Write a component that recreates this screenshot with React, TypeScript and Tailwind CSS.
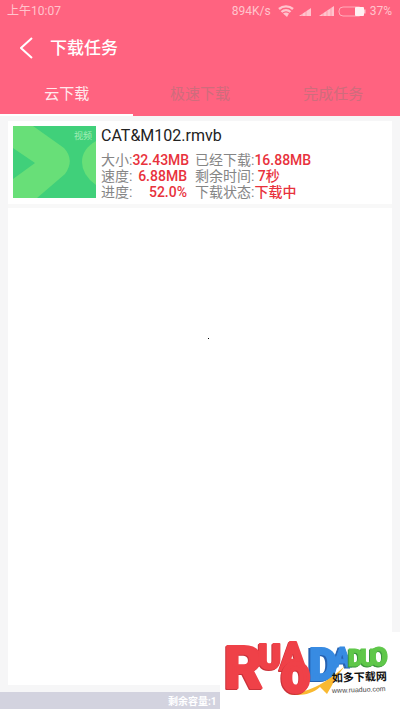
import { useState } from 'react';

const tabs = ['云下载', '极速下载', '完成任务'];

const task = {
  name: 'CAT&M102.rmvb',
  rows: [
    { label: '大小:', value: '32.43MB', label2: '已经下载:', value2: '16.88MB' },
    { label: '速度:', value: '6.88MB', label2: '剩余时间:', value2: ' 7秒' },
    { label: '进度:', value: '52.0%', label2: '下载状态:', value2: '下载中' },
  ],
};

function StatusBar() {
  return (
    <div className="flex h-[22px] items-center pr-2 pl-[7px] text-xs text-[#ffc4cd]">
      <span>上午10:07</span>
      <span className="ml-auto">894K/s</span>
      <svg className="ml-[7px] h-3 w-4" viewBox="0 0 16 12" fill="none" stroke="currentColor" strokeWidth="2.4">
        <path d="M1 4C5 .5 11 .5 15 4M3.5 7C6 4.5 10 4.5 12.5 7" />
        <path d="M5 8.5C7 7 9 7 11 8.5L9 12Z" fill="currentColor" stroke="none" />
      </svg>
      <svg className="ml-[5px] h-3 w-3" viewBox="0 0 12 12" fill="currentColor">
        <path d="M0 11L12 3V11Z" />
        <path d="M3 8v3M7 6v5" stroke="#ff6380" strokeWidth=".4" />
      </svg>
      <svg className="ml-2 h-3 w-[15px]" viewBox="0 0 15 12" fill="currentColor">
        <path d="M0 11L15 1V11Z" />
        <path d="M4 8v3M8 6v5M12 3v8" stroke="#ff6380" strokeWidth=".4" />
      </svg>
      <svg className="ml-1 h-3 w-7" viewBox="0 0 28 12">
        <rect x="1" y="2" width="24" height="9" rx="4" fill="none" stroke="#ffaebb" />
        <rect x="17" y="2" width="9" height="9" rx="1" fill="#fff0f2" />
        <path d="M26 4.5h1.5v4H26z" fill="#ffc4cd" />
      </svg>
      <span className="ml-1">37%</span>
    </div>
  );
}

function Thumbnail() {
  return (
    <div className="relative h-[72px] w-[83px] shrink-0 overflow-hidden bg-[#40d07a]">
      <svg className="h-full w-full" viewBox="0 0 83 72" fill="#68df78">
        <path d="M0 0H20L51 22Q62 34 52 48L24 72H0V53L22 37L0 22Z" />
        <path d="M83 15Q69 23 69 36T83 59Z" />
      </svg>
      <span className="absolute top-1 right-1 text-[9px] leading-3 text-[#a5efb8]">视频</span>
    </div>
  );
}

function Watermark() {
  return (
    <div className="absolute right-0 bottom-0 bg-white">
      <svg
        className="block h-[77px] w-[180px] font-['Roboto',sans-serif] font-black"
        viewBox="0 0 180 77"
        role="img"
        aria-label="如多下载网"
      >
        <g fill="#ef4148" stroke="#ef4148" strokeLinejoin="round" className="drop-shadow-[-1px_1px_0_#c9323a]">
          <text x="4" y="56" fontSize="60" strokeWidth="2">R</text>
          <text x="38" y="37" fontSize="35" strokeWidth="2">U</text>
          <text x="60" y="38" fontSize="38" strokeWidth="2">A</text>
        </g>
        <g className="drop-shadow-[-2px_1px_0_#2661b0]" fill="#388be2" stroke="#388be2">
          <text x="89" y="48" fontSize="44" strokeWidth="2">D</text>
          <text x="113" y="35" fontSize="27" strokeWidth="1">A</text>
        </g>
        <g className="drop-shadow-[-1px_1px_0_#37923a]" fill="#5fc74a" stroke="#5fc74a" strokeWidth="1">
          <text x="128" y="34" fontSize="24">D</text>
          <text x="140" y="34" fontSize="24">U</text>
          <text x="150" y="34" fontSize="26">O</text>
        </g>
        <path d="M68 62C92 60 108 49 125 34C117 43 113 52 107 62L100 55C91 63 80 64 68 62Z" fill="#f9b931" />
        <g className="drop-shadow-[-1px_1px_0_#c9323a]">
          <text x="62" y="60" fontSize="40" fill="#ef4148" stroke="#ef4148" strokeWidth="4">O</text>
        </g>
        <g transform="rotate(-2 112 50)" fill="#111" className="font-['Noto_Sans_CJK_SC',sans-serif] font-bold">
          <text x="112" y="50" fontSize="11">如多下载网</text>
        </g>
        <g transform="rotate(-2 112 60)" fill="#444" className="font-['Liberation_Sans',sans-serif] font-normal">
          <text x="112" y="61" fontSize="7">www.ruaduo.com</text>
        </g>
      </svg>
    </div>
  );
}

export default function App() {
  const [active, setActive] = useState(0);

  return (
    <div className="relative flex min-h-screen flex-col bg-[#f6f6f7] font-['Roboto','Noto_Sans_CJK_SC',sans-serif]">
      <header className="bg-[#ff6380] text-white">
        <StatusBar />
        <div className="flex h-[52px] items-center gap-3.5 pl-5">
          <button aria-label="返回" className="h-6 w-4">
            <svg className="h-6 w-4" viewBox="0 0 16 24" fill="none" stroke="currentColor" strokeWidth="2">
              <path d="M12 2L1 12L12 22" />
            </svg>
          </button>
          <h1 className="text-[17px] leading-6 font-medium">下载任务</h1>
        </div>
        <nav className="grid h-[42px] grid-cols-3">
          {tabs.map((tab, i) => (
            <button
              key={tab}
              onClick={() => setActive(i)}
              className={`border-b-2 text-[15px] leading-5 ${
                i === active ? 'border-white text-[#ffe9ec]' : 'border-transparent text-[#cf6c7c]'
              }`}
            >
              {tab}
            </button>
          ))}
        </nav>
      </header>

      <main className="mx-2 mt-[5px] mb-[7px] flex flex-1 flex-col bg-white">
        <article className="flex gap-[5px] border-b-4 border-[#f8f8f8] px-[5px] pt-[5px] pb-1">
          <Thumbnail />
          <div>
            <h2 className="mb-1.5 text-base leading-5 text-[#222]">{task.name}</h2>
            {task.rows.map((row) => (
              <div key={row.label} className="flex gap-2 text-sm leading-4 whitespace-pre text-[#858585]">
                <div className="flex w-[86px] justify-between">
                  <span>{row.label}</span>
                  <span className="font-medium text-[#e8323c]">{row.value}</span>
                </div>
                <div>
                  <span>{row.label2}</span>
                  <span className="font-medium text-[#e8323c]">{row.value2}</span>
                </div>
              </div>
            ))}
          </div>
        </article>
        <div className="flex flex-1 items-center justify-center pb-[216px] pl-4">
          <span className="h-px w-px bg-black" />
        </div>
      </main>

      <footer className="h-[17px] bg-[#d3d3df] pt-0.5 pl-42 text-[10px] leading-[15px] font-bold text-white">
        剩余容量:1
      </footer>
      <Watermark />
    </div>
  );
}
